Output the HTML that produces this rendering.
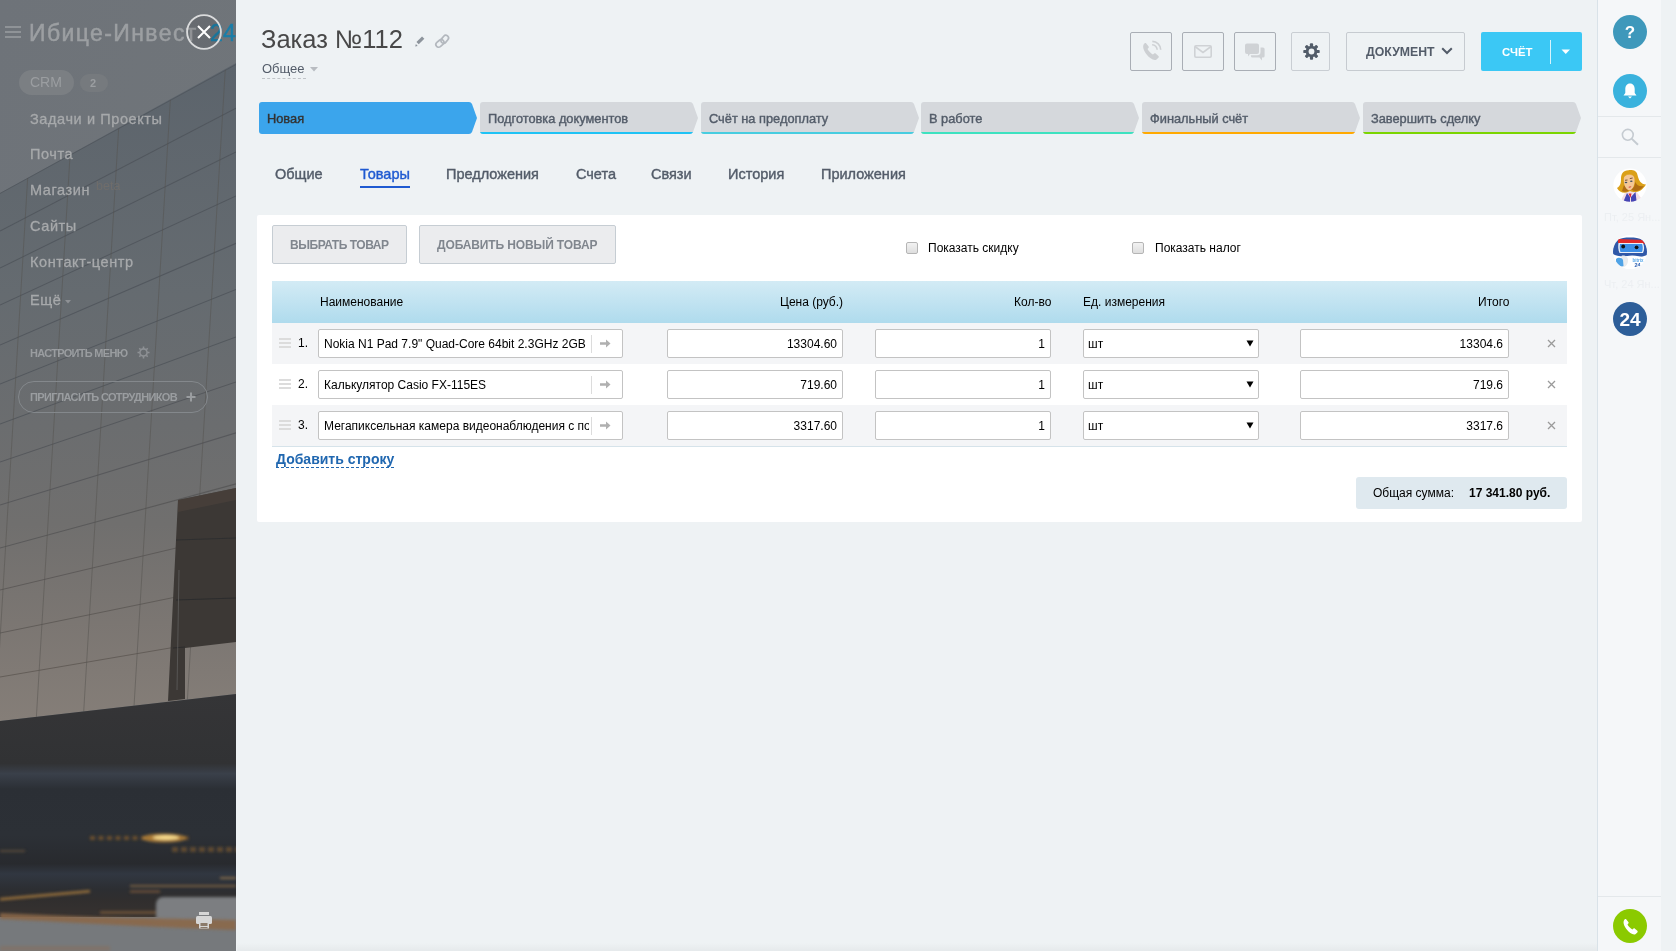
<!DOCTYPE html>
<html><head><meta charset="utf-8">
<style>
*{box-sizing:border-box;margin:0;padding:0}
html,body{width:1676px;height:951px;overflow:hidden;background:#eef2f4;font-family:"Liberation Sans",sans-serif;position:relative}
.a,.mi,.tab,.stage,.hd,.inp{will-change:transform}
.a{position:absolute}
#side{left:0;top:0;width:236px;height:951px;overflow:hidden;background:#6d7277}
#side .mi{position:absolute;left:30px;font-size:14.5px;letter-spacing:.6px;-webkit-text-stroke:.3px #a7a9ab;line-height:17px;color:#a7a9ab;white-space:nowrap}
#rp{left:1597px;top:0;width:64px;height:951px;background:#f5f7f9;border-left:1px solid #d9e2e8}
.tb{position:absolute;top:32px;height:39px;border:1px solid #a9aeb5;border-radius:2px}
.stage{position:absolute;top:103px;height:32px;font-size:12.8px;letter-spacing:0px;-webkit-text-stroke:.4px currentColor;color:#535c69;padding-left:8px;line-height:32px;white-space:nowrap}
.tab{position:absolute;top:166px;font-size:14.5px;-webkit-text-stroke:.4px currentColor;line-height:16px;color:#535c69;white-space:nowrap}
.inp{position:absolute;height:29px;background:#fff;border:1px solid #c3c3c3;border-radius:2px;font-size:12px;color:#000;line-height:28px;white-space:nowrap;overflow:hidden}
.num{text-align:right;padding-right:5px}
.hd{position:absolute;top:295px;font-size:12px;color:#000;white-space:nowrap}

.btn{background:#ebecee;border:1px solid #c6cdd3;border-radius:2px}
.btntx{font-size:12px;font-weight:bold;color:#80868e;white-space:nowrap;line-height:14px}
.cb{width:12px;height:12px;border:1px solid #b5b5b5;border-radius:2px;background:linear-gradient(#f2f2f2,#dedede)}
.botstrip{position:absolute;left:237px;top:943px;width:1360px;height:8px;background:linear-gradient(rgba(0,0,0,0),rgba(0,0,0,.035))}
</style></head><body>
<div id="side" class="a"><svg class="a" style="left:0;top:0" width="236" height="951" viewBox="0 0 236 951">
<defs>
<linearGradient id="sky" x1="0" y1="0" x2="1" y2="1"><stop offset="0" stop-color="#6e7379"/><stop offset="1" stop-color="#71767a"/></linearGradient>
<linearGradient id="fac" x1="0" y1="64" x2="0" y2="721" gradientUnits="userSpaceOnUse"><stop offset="0" stop-color="#5c646c"/><stop offset="0.35" stop-color="#656b70"/><stop offset="0.55" stop-color="#6b6d6f"/><stop offset="0.7" stop-color="#706f6e"/><stop offset="0.85" stop-color="#7b7672"/><stop offset="1" stop-color="#857e78"/></linearGradient>
<linearGradient id="road" x1="0" y1="694" x2="0" y2="951" gradientUnits="userSpaceOnUse"><stop offset="0" stop-color="#353537"/><stop offset="0.27" stop-color="#313234"/><stop offset="0.31" stop-color="#3a404a"/><stop offset="0.37" stop-color="#2b2f35"/><stop offset="0.55" stop-color="#2c3036"/><stop offset="0.66" stop-color="#282a2e"/><stop offset="0.7" stop-color="#313741"/><stop offset="0.76" stop-color="#2c2e32"/><stop offset="0.8" stop-color="#302e2e"/><stop offset="0.9" stop-color="#3a3431"/><stop offset="1" stop-color="#3d3833"/></linearGradient>
<filter id="bl" x="-20%" y="-50%" width="140%" height="200%"><feGaussianBlur stdDeviation="1.5"/></filter>
<filter id="bl2" x="-20%" y="-100%" width="140%" height="300%"><feGaussianBlur stdDeviation="3"/></filter>
<clipPath id="facclip"><path d="M0 193 L236 64 L236 694 L0 721Z"/></clipPath>
</defs>
<rect width="236" height="951" fill="url(#sky)"/>
<path d="M0 193.0 L236 63.1 L236 694 L0 721Z" fill="url(#fac)"/>
<line x1="0" y1="193.5" x2="236" y2="64.5" stroke="#4b5057" stroke-width="1" opacity="0.6"/>
<g clip-path="url(#facclip)">
<line x1="0" y1="231.0" x2="236" y2="108.2" stroke="#4b5057" stroke-width="1.1" opacity="0.7"/>
<line x1="0" y1="268.0" x2="236" y2="152.0" stroke="#4b5057" stroke-width="1.1" opacity="0.7"/>
<line x1="0" y1="305.0" x2="236" y2="195.9" stroke="#4b5057" stroke-width="1.1" opacity="0.7"/>
<line x1="0" y1="345.0" x2="236" y2="243.3" stroke="#4b5057" stroke-width="1.1" opacity="0.7"/>
<line x1="0" y1="384.0" x2="236" y2="289.5" stroke="#4b5057" stroke-width="1.1" opacity="0.7"/>
<line x1="0" y1="424.0" x2="236" y2="336.9" stroke="#4b5056" stroke-width="1.1" opacity="0.7"/>
<line x1="0" y1="462.0" x2="236" y2="382.0" stroke="#4d5055" stroke-width="1.1" opacity="0.7"/>
<line x1="0" y1="505.0" x2="236" y2="432.9" stroke="#4f5054" stroke-width="1.1" opacity="0.7"/>
<line x1="0" y1="548.0" x2="236" y2="483.9" stroke="#515152" stroke-width="1.1" opacity="0.7"/>
<line x1="0" y1="590.0" x2="236" y2="533.7" stroke="#545150" stroke-width="1.1" opacity="0.7"/>
<line x1="0" y1="633.0" x2="236" y2="584.7" stroke="#56524f" stroke-width="1.1" opacity="0.7"/>
<line x1="0" y1="677.0" x2="236" y2="636.8" stroke="#58524d" stroke-width="1.1" opacity="0.7"/>
<line x1="27.7" y1="177.7" x2="-4.8" y2="720" stroke="#55534f" stroke-width="1" opacity="0.5"/>
<line x1="70.1" y1="154.4" x2="36.2" y2="720" stroke="#55534f" stroke-width="1" opacity="0.5"/>
<line x1="118.7" y1="127.7" x2="83.2" y2="720" stroke="#55534f" stroke-width="1" opacity="0.5"/>
<line x1="170.4" y1="99.2" x2="133.2" y2="720" stroke="#55534f" stroke-width="1" opacity="0.5"/>
<line x1="225.3" y1="69.1" x2="186.2" y2="720" stroke="#55534f" stroke-width="1" opacity="0.5"/>
</g>
<path d="M178 500 L236 488 L236 642 L185 648 L185 699 L168 701Z" fill="#3c3835"/><path d="M178 500 L236 488 L236 500 L178 512Z" fill="#4a423c" opacity=".7"/>
<path d="M176 600 L236 598 M173 648 L185 647" stroke="#2c2c2d" stroke-width="1.2"/>
<path d="M176 540 L236 538" stroke="#2f2f30" stroke-width="1.2"/>
<line x1="179" y1="570" x2="177" y2="690" stroke="#6a6a6a" stroke-width="1" opacity=".6"/>
<path d="M0 721 L236 694 L236 951 L0 951Z" fill="url(#road)"/>
<g filter="url(#bl)">
<rect x="90.0" y="836" width="5" height="4" fill="#a06a28" opacity="0.55"/>
<rect x="98.5" y="836" width="5" height="4" fill="#a06a28" opacity="0.55"/>
<rect x="107.0" y="836" width="5" height="4" fill="#a06a28" opacity="0.55"/>
<rect x="115.5" y="836" width="5" height="4" fill="#a06a28" opacity="0.55"/>
<rect x="124.0" y="836" width="5" height="4" fill="#a06a28" opacity="0.55"/>
<rect x="132.5" y="836" width="5" height="4" fill="#a06a28" opacity="0.55"/>
<rect x="141.0" y="836" width="5" height="4" fill="#a06a28" opacity="0.55"/>
<rect x="149.5" y="836" width="5" height="4" fill="#a06a28" opacity="0.55"/>
<rect x="158.0" y="836" width="5" height="4" fill="#a06a28" opacity="0.55"/>
<rect x="166.5" y="836" width="5" height="4" fill="#a06a28" opacity="0.55"/>
<rect x="175.0" y="836" width="5" height="4" fill="#a06a28" opacity="0.55"/>
<rect x="183.5" y="836" width="5" height="4" fill="#a06a28" opacity="0.55"/>
<rect x="172.0" y="847" width="6" height="5" fill="#8a6030" opacity="0.55"/>
<rect x="181.0" y="847" width="6" height="5" fill="#8a6030" opacity="0.55"/>
<rect x="190.0" y="847" width="6" height="5" fill="#8a6030" opacity="0.55"/>
<rect x="199.0" y="847" width="6" height="5" fill="#8a6030" opacity="0.55"/>
<rect x="208.0" y="847" width="6" height="5" fill="#8a6030" opacity="0.55"/>
<rect x="217.0" y="847" width="6" height="5" fill="#8a6030" opacity="0.55"/>
<rect x="226.0" y="847" width="6" height="5" fill="#8a6030" opacity="0.55"/>
<rect x="235.0" y="847" width="6" height="5" fill="#8a6030" opacity="0.55"/>
<ellipse cx="164" cy="838" rx="22" ry="4.5" fill="#c08a38" opacity=".8"/><ellipse cx="166" cy="837.5" rx="13" ry="2.5" fill="#f5d88a"/>
<rect x="0" y="850" width="25" height="2" fill="#7a6040" opacity="0.6"/>
<path d="M0 898 L90 890 L90 892.5 L0 900.5Z" fill="#b08040" opacity="0.85"/>
<rect x="130" y="885" width="106" height="2" fill="#8a6a48" opacity="0.8"/>
<rect x="220" y="877" width="16" height="2" fill="#9a7a50" opacity="0.8"/>
<rect x="100" y="911.5" width="58" height="2" fill="#a07040" opacity="0.7"/><rect x="130" y="890.5" width="30" height="2" fill="#9a6a40" opacity="0.7"/>
</g>
<rect x="0" y="917" width="236" height="34" fill="#76797c"/>
<rect x="156" y="897" width="90" height="30" rx="7" fill="#7b7e81" filter="url(#bl)"/>
<path d="M0 913 C60 916 120 918 236 920 L236 930 C150 927 60 922 0 919Z" fill="#8a6848" opacity="0.9" filter="url(#bl)"/>
<rect x="0" y="946" width="110" height="5" fill="#86705e" opacity="0.6" filter="url(#bl)"/>
</svg><div class="a" style="left:5px;top:26px;width:16px;height:2px;background:#8f9397"></div>
<div class="a" style="left:5px;top:31px;width:16px;height:2px;background:#8f9397"></div>
<div class="a" style="left:5px;top:36px;width:16px;height:2px;background:#8f9397"></div>
<div class="a" style="left:29px;top:17px;font-size:23px;letter-spacing:1.4px;-webkit-text-stroke:0.5px #9c9fa2;color:#9c9fa2;white-space:nowrap;line-height:32px">Ибице-Инвест</div><div class="a" style="left:210px;top:17px;font-size:23px;letter-spacing:0.3px;-webkit-text-stroke:0.5px #1b7ea8;color:#1b7ea8;white-space:nowrap;line-height:32px">24</div>
<div class="a" style="left:19px;top:70px;width:55px;height:25px;border-radius:13px;background:#7b7f83"></div>
<div class="a" style="left:30px;top:74px;font-size:14px;color:#9b9ea1;line-height:17px">CRM</div>
<div class="a" style="left:80px;top:74px;width:28px;height:18px;border-radius:9px;background:#767a7e"></div>
<div class="a" style="left:90px;top:76px;font-size:11px;font-weight:bold;color:#9b9ea1;line-height:14px">2</div>
<div class="mi" style="top:111px">Задачи и Проекты</div>
<div class="mi" style="top:146px">Почта</div>
<div class="mi" style="top:182px">Магазин</div>
<div class="a" style="left:96px;top:179px;font-size:12.5px;color:#6f6d6b;line-height:15px">beta</div>
<div class="mi" style="top:218px">Сайты</div>
<div class="mi" style="top:254px">Контакт-центр</div>
<div class="mi" style="top:292px">Ещё</div>
<svg class="a" style="left:65px;top:300px" width="6" height="4"><path d="M0 0 H6 L3 3.5Z" fill="#8e9195"/></svg>
<div class="a" style="left:30px;top:347px;font-size:11px;letter-spacing:-0.7px;font-weight:bold;color:#9a9da0;white-space:nowrap;line-height:13px">НАСТРОИТЬ МЕНЮ</div>
<svg class="a" style="left:137px;top:346px" width="13" height="13" viewBox="0 0 13 13"><circle cx="6.5" cy="6.5" r="3.6" fill="none" stroke="#8e9195" stroke-width="1.6"/><g stroke="#8e9195" stroke-width="1.6"><path d="M6.5 0.5 V2.5 M6.5 10.5 V12.5 M0.5 6.5 H2.5 M10.5 6.5 H12.5 M2.3 2.3 L3.7 3.7 M9.3 9.3 L10.7 10.7 M2.3 10.7 L3.7 9.3 M9.3 3.7 L10.7 2.3"/></g></svg>
<div class="a" style="left:18px;top:381px;width:190px;height:32px;border-radius:16px;border:1px solid #84888c"></div>
<div class="a" style="left:30px;top:391px;font-size:11px;letter-spacing:-0.65px;font-weight:bold;color:#9a9da0;white-space:nowrap;line-height:13px">ПРИГЛАСИТЬ СОТРУДНИКОВ</div>
<svg class="a" style="left:186px;top:392px" width="10" height="10"><path d="M5 0.5 V9.5 M0.5 5 H9.5" stroke="#9a9da0" stroke-width="2"/></svg>
<svg class="a" style="left:196px;top:912px" width="16" height="17" viewBox="0 0 16 17"><rect x="3" y="0" width="10" height="3" fill="#d6d6d6"/><rect x="0" y="4" width="16" height="8" rx="1.5" fill="#d6d6d6"/><rect x="3" y="10" width="10" height="6.5" fill="#d6d6d6"/><rect x="4.5" y="11" width="7" height="3" fill="#8a7a6a"/><rect x="4.5" y="15" width="7" height="1" fill="#8a7a6a"/></svg>
<svg class="a" style="left:186px;top:14px" width="36" height="36" viewBox="0 0 36 36"><circle cx="18" cy="18" r="16.9" fill="#000" fill-opacity="0.07" stroke="#dadbdc" stroke-width="1.9"/><path d="M12 12 L24 24 M24 12 L12 24" stroke="#fff" stroke-width="2"/></svg>
<div class="a" style="left:236px;top:0;width:1px;height:951px;background:#f3f4f5"></div>
</div>
<div id="rp" class="a"></div>
<!-- header -->
<div class="a" style="left:261px;top:23px;font-size:25.5px;color:#484848;white-space:nowrap;line-height:32px">Заказ №112</div>
<svg class="a" style="left:414px;top:35px" width="13" height="13" viewBox="0 0 13 13"><path d="M3.6 8.2 L9.2 2.6" stroke="#8d949c" stroke-width="3.3"/><path d="M1.2 11.6 L1.9 9.1 L3.7 10.9Z" fill="#8d949c"/></svg><svg class="a" style="left:433px;top:32px" width="18" height="18" viewBox="0 0 18 18"><g fill="none" stroke="#b3b8be" stroke-width="1.7"><rect x="2.5" y="8.7" width="8.8" height="5.4" rx="2.7" transform="rotate(-40 6.9 11.4)"/><rect x="7.3" y="4.6" width="8.8" height="5.4" rx="2.7" transform="rotate(-50 11.7 7.3)"/></g></svg>
<div class="a" style="left:262px;top:61px;font-size:13px;color:#535c69;white-space:nowrap;line-height:16px">Общее</div>
<div class="a" style="left:262px;top:78px;width:44px;border-top:1px dashed #c0c4c8"></div>
<svg class="a" style="left:310px;top:67px" width="8" height="5"><path d="M0 0 L8 0 L4 4.5Z" fill="#b8bcc1"/></svg>

<!-- toolbar -->
<div class="tb" style="left:1130px;width:42px"></div>
<svg class="a" style="left:1141px;top:40px" width="21" height="21" viewBox="0 0 20 20"><path d="M3.5 3 C1.5 4.5 1.3 8 4.8 13 C8.3 17.5 12 19.8 14.5 18.7 L16.6 16.9 C17.1 16.4 17.1 15.7 16.6 15.2 L14 12.9 C13.5 12.4 12.8 12.5 12.3 13 L11.3 13.9 C9.5 12.9 7.1 10.4 6.2 8.6 L7.1 7.6 C7.6 7.1 7.6 6.4 7.1 5.9 L5 3.3 C4.6 2.8 4 2.7 3.5 3Z" fill="#cdd0d3"/><path d="M10.8 1.3 A8.2 8.2 0 0 1 18.8 9.3 M10.6 4.6 A4.8 4.8 0 0 1 15.4 9.4" fill="none" stroke="#cdd0d3" stroke-width="1.5"/></svg>
<div class="tb" style="left:1182px;width:42px"></div>
<svg class="a" style="left:1194px;top:45px" width="18" height="13" viewBox="0 0 18 13"><rect x="0.8" y="0.8" width="16.4" height="11.4" rx="1.2" fill="none" stroke="#cfd2d5" stroke-width="1.6"/><path d="M1 1.5 L9 7.5 L17 1.5" fill="none" stroke="#cfd2d5" stroke-width="1.6"/></svg>
<div class="tb" style="left:1234px;width:42px"></div>
<svg class="a" style="left:1244px;top:43px" width="22" height="20" viewBox="0 0 22 20"><path d="M3 0.5 H13 A2 2 0 0 1 15 2.5 V9 A2 2 0 0 1 13 11 H6 L4 13.5 V11 H3 A2 2 0 0 1 1 9 V2.5 A2 2 0 0 1 3 0.5Z" fill="#cfd2d5"/><path d="M16.5 4.5 H19 A1.6 1.6 0 0 1 20.6 6.1 V13 A1.6 1.6 0 0 1 19 14.6 H18 V17.5 L15.5 14.6 H8.5 A1.6 1.6 0 0 1 6.9 13 V12.3 H13.2 A3.3 3.3 0 0 0 16.5 9Z" fill="#cfd2d5"/></svg>
<div class="tb" style="left:1291px;width:39px;border-color:#c9ced3"></div>
<svg class="a" style="left:1303px;top:43px" width="17" height="17" viewBox="0 0 17 17"><g fill="#525c69"><circle cx="8.5" cy="8.5" r="5.8"/><rect x="6.9" y="0.3" width="3.2" height="16.4" rx="0.9"/><rect x="6.9" y="0.3" width="3.2" height="16.4" rx="0.9" transform="rotate(45 8.5 8.5)"/><rect x="6.9" y="0.3" width="3.2" height="16.4" rx="0.9" transform="rotate(90 8.5 8.5)"/><rect x="6.9" y="0.3" width="3.2" height="16.4" rx="0.9" transform="rotate(135 8.5 8.5)"/></g><circle cx="8.5" cy="8.5" r="2.9" fill="#eef2f4"/></svg>
<div class="tb" style="left:1346px;width:119px;border-color:#c6cbd0"></div>
<div class="a" style="left:1366px;top:44px;font-size:12.3px;font-weight:bold;color:#535c69;line-height:16px;white-space:nowrap">ДОКУМЕНТ</div>
<svg class="a" style="left:1441px;top:47px" width="12" height="8" viewBox="0 0 12 8"><path d="M1.2 1.2 L6 6 L10.8 1.2" fill="none" stroke="#535c69" stroke-width="2"/></svg>
<div class="a" style="left:1481px;top:32px;width:101px;height:39px;background:#3bc8f5;border-radius:2px"></div>
<div class="a" style="left:1502px;top:44px;font-size:11.4px;font-weight:bold;color:#fff;line-height:16px;white-space:nowrap">СЧЁТ</div>
<div class="a" style="left:1550px;top:40px;width:1px;height:24px;background:#fff;opacity:.8"></div>
<svg class="a" style="left:1561px;top:49px" width="10" height="6"><path d="M0.5 0.5 L9 0.5 L4.75 5Z" fill="#fff"/></svg>

<svg class="a" style="left:259px;top:102px" width="219" height="32" viewBox="0 0 219 32"><path d="M3 0 H210 Q212 0 213 2 L218 16 L213 30 Q212 32 210 32 H3 Q0 32 0 29 V3 Q0 0 3 0Z" fill="#3ba5ec"/></svg>
<div class="stage" style="left:259px;color:#333">Новая</div>
<svg class="a" style="left:480px;top:102px" width="219" height="32" viewBox="0 0 219 32"><defs><clipPath id="c480"><path d="M3 0 H210 Q212 0 213 2 L218 16 L213 30 Q212 32 210 32 H3 Q0 32 0 29 V3 Q0 0 3 0Z"/></clipPath></defs><path d="M3 0 H210 Q212 0 213 2 L218 16 L213 30 Q212 32 210 32 H3 Q0 32 0 29 V3 Q0 0 3 0Z" fill="#d5d8dc"/><rect x="0" y="30" width="219" height="2" fill="#1ec3f5" clip-path="url(#c480)"/></svg>
<div class="stage" style="left:480px;color:#535c69">Подготовка документов</div>
<svg class="a" style="left:701px;top:102px" width="219" height="32" viewBox="0 0 219 32"><defs><clipPath id="c701"><path d="M3 0 H210 Q212 0 213 2 L218 16 L213 30 Q212 32 210 32 H3 Q0 32 0 29 V3 Q0 0 3 0Z"/></clipPath></defs><path d="M3 0 H210 Q212 0 213 2 L218 16 L213 30 Q212 32 210 32 H3 Q0 32 0 29 V3 Q0 0 3 0Z" fill="#d5d8dc"/><rect x="0" y="30" width="219" height="2" fill="#47cde0" clip-path="url(#c701)"/></svg>
<div class="stage" style="left:701px;color:#535c69">Счёт на предоплату</div>
<svg class="a" style="left:921px;top:102px" width="219" height="32" viewBox="0 0 219 32"><defs><clipPath id="c921"><path d="M3 0 H210 Q212 0 213 2 L218 16 L213 30 Q212 32 210 32 H3 Q0 32 0 29 V3 Q0 0 3 0Z"/></clipPath></defs><path d="M3 0 H210 Q212 0 213 2 L218 16 L213 30 Q212 32 210 32 H3 Q0 32 0 29 V3 Q0 0 3 0Z" fill="#d5d8dc"/><rect x="0" y="30" width="219" height="2" fill="#3de2c0" clip-path="url(#c921)"/></svg>
<div class="stage" style="left:921px;color:#535c69">В работе</div>
<svg class="a" style="left:1142px;top:102px" width="219" height="32" viewBox="0 0 219 32"><defs><clipPath id="c1142"><path d="M3 0 H210 Q212 0 213 2 L218 16 L213 30 Q212 32 210 32 H3 Q0 32 0 29 V3 Q0 0 3 0Z"/></clipPath></defs><path d="M3 0 H210 Q212 0 213 2 L218 16 L213 30 Q212 32 210 32 H3 Q0 32 0 29 V3 Q0 0 3 0Z" fill="#d5d8dc"/><rect x="0" y="30" width="219" height="2" fill="#ffa900" clip-path="url(#c1142)"/></svg>
<div class="stage" style="left:1142px;color:#535c69">Финальный счёт</div>
<svg class="a" style="left:1363px;top:102px" width="219" height="32" viewBox="0 0 219 32"><defs><clipPath id="c1363"><path d="M3 0 H210 Q212 0 213 2 L218 16 L213 30 Q212 32 210 32 H3 Q0 32 0 29 V3 Q0 0 3 0Z"/></clipPath></defs><path d="M3 0 H210 Q212 0 213 2 L218 16 L213 30 Q212 32 210 32 H3 Q0 32 0 29 V3 Q0 0 3 0Z" fill="#d5d8dc"/><rect x="0" y="30" width="219" height="2" fill="#7bd500" clip-path="url(#c1363)"/></svg>
<div class="stage" style="left:1363px;color:#535c69">Завершить сделку</div>
<div class="tab" style="left:275px">Общие</div>
<div class="tab" style="left:360px;color:#1f5ad1">Товары</div>
<div class="a" style="left:360px;top:186px;width:50px;height:2px;background:#1f5ad1"></div>
<div class="tab" style="left:446px">Предложения</div>
<div class="tab" style="left:576px">Счета</div>
<div class="tab" style="left:651px">Связи</div>
<div class="tab" style="left:728px">История</div>
<div class="tab" style="left:821px">Приложения</div>

<div class="a" style="left:257px;top:215px;width:1325px;height:307px;background:#fff;border-radius:2px"></div>
<div class="a btn" style="left:272px;top:225px;width:135px;height:39px"></div>
<div class="a btntx" style="left:290px;top:238px;letter-spacing:-.45px">ВЫБРАТЬ ТОВАР</div>
<div class="a btn" style="left:419px;top:225px;width:197px;height:39px"></div>
<div class="a btntx" style="left:437px;top:238px;letter-spacing:-.12px">ДОБАВИТЬ НОВЫЙ ТОВАР</div>
<div class="a cb" style="left:906px;top:242px"></div>
<div class="a" style="left:928px;top:241px;font-size:12px;line-height:15px;color:#000;white-space:nowrap">Показать скидку</div>
<div class="a cb" style="left:1132px;top:242px"></div>
<div class="a" style="left:1155px;top:241px;font-size:12px;line-height:15px;color:#000;white-space:nowrap">Показать налог</div>
<div class="a" style="left:272px;top:281px;width:1295px;height:42px;background:linear-gradient(#d3ebf5,#afdbed)"></div>
<div class="hd" style="left:320px">Наименование</div>
<div class="hd" style="right:833px">Цена (руб.)</div>
<div class="hd" style="right:625px">Кол-во</div>
<div class="hd" style="left:1083px">Ед. измерения</div>
<div class="hd" style="right:167px">Итого</div>
<div class="a" style="left:272px;top:323px;width:1295px;height:41px;background:#f4f5f7"></div>
<div class="a" style="left:279px;top:338px;width:12px;height:2px;background:#dcdcdc"></div>
<div class="a" style="left:279px;top:342px;width:12px;height:2px;background:#dcdcdc"></div>
<div class="a" style="left:279px;top:346px;width:12px;height:2px;background:#dcdcdc"></div>
<div class="a" style="left:298px;top:336px;font-size:12px;line-height:15px;color:#000">1.</div>
<div class="inp" style="left:318px;top:329px;width:305px;padding-left:5px"><span style="display:inline-block;width:265px;overflow:hidden">Nokia N1 Pad 7.9" Quad-Core 64bit 2.3GHz 2GB</span></div>
<div class="a" style="left:591px;top:335px;width:1px;height:18px;background:#dcdcdc"></div>
<svg class="a" style="left:600px;top:339px" width="11" height="9" viewBox="0 0 11 9"><path d="M0 3.3 H6 V0.5 L10.5 4.5 L6 8.5 V5.7 H0Z" fill="#b0b0b0"/></svg>
<div class="inp num" style="left:667px;top:329px;width:176px">13304.60</div>
<div class="inp num" style="left:875px;top:329px;width:176px">1</div>
<div class="inp" style="left:1083px;top:329px;width:176px;padding-left:4px">шт</div>
<svg class="a" style="left:1246px;top:340px" width="8" height="7"><path d="M0.5 0.5 H7.5 L4 6.5Z" fill="#000"/></svg>
<div class="inp num" style="left:1300px;top:329px;width:209px">13304.6</div>
<svg class="a" style="left:1547px;top:339px" width="9" height="9" viewBox="0 0 9 9"><path d="M1 1 L8 8 M8 1 L1 8" stroke="#9a9a9a" stroke-width="1.3"/></svg>
<div class="a" style="left:272px;top:364px;width:1295px;height:41px;background:#fff"></div>
<div class="a" style="left:279px;top:379px;width:12px;height:2px;background:#dcdcdc"></div>
<div class="a" style="left:279px;top:383px;width:12px;height:2px;background:#dcdcdc"></div>
<div class="a" style="left:279px;top:387px;width:12px;height:2px;background:#dcdcdc"></div>
<div class="a" style="left:298px;top:377px;font-size:12px;line-height:15px;color:#000">2.</div>
<div class="inp" style="left:318px;top:370px;width:305px;padding-left:5px"><span style="display:inline-block;width:265px;overflow:hidden">Калькулятор Casio FX-115ES</span></div>
<div class="a" style="left:591px;top:376px;width:1px;height:18px;background:#dcdcdc"></div>
<svg class="a" style="left:600px;top:380px" width="11" height="9" viewBox="0 0 11 9"><path d="M0 3.3 H6 V0.5 L10.5 4.5 L6 8.5 V5.7 H0Z" fill="#b0b0b0"/></svg>
<div class="inp num" style="left:667px;top:370px;width:176px">719.60</div>
<div class="inp num" style="left:875px;top:370px;width:176px">1</div>
<div class="inp" style="left:1083px;top:370px;width:176px;padding-left:4px">шт</div>
<svg class="a" style="left:1246px;top:381px" width="8" height="7"><path d="M0.5 0.5 H7.5 L4 6.5Z" fill="#000"/></svg>
<div class="inp num" style="left:1300px;top:370px;width:209px">719.6</div>
<svg class="a" style="left:1547px;top:380px" width="9" height="9" viewBox="0 0 9 9"><path d="M1 1 L8 8 M8 1 L1 8" stroke="#9a9a9a" stroke-width="1.3"/></svg>
<div class="a" style="left:272px;top:405px;width:1295px;height:41px;background:#f4f5f7"></div>
<div class="a" style="left:279px;top:420px;width:12px;height:2px;background:#dcdcdc"></div>
<div class="a" style="left:279px;top:424px;width:12px;height:2px;background:#dcdcdc"></div>
<div class="a" style="left:279px;top:428px;width:12px;height:2px;background:#dcdcdc"></div>
<div class="a" style="left:298px;top:418px;font-size:12px;line-height:15px;color:#000">3.</div>
<div class="inp" style="left:318px;top:411px;width:305px;padding-left:5px"><span style="display:inline-block;width:265px;overflow:hidden">Мегапиксельная камера видеонаблюдения с поддержкой</span></div>
<div class="a" style="left:591px;top:417px;width:1px;height:18px;background:#dcdcdc"></div>
<svg class="a" style="left:600px;top:421px" width="11" height="9" viewBox="0 0 11 9"><path d="M0 3.3 H6 V0.5 L10.5 4.5 L6 8.5 V5.7 H0Z" fill="#b0b0b0"/></svg>
<div class="inp num" style="left:667px;top:411px;width:176px">3317.60</div>
<div class="inp num" style="left:875px;top:411px;width:176px">1</div>
<div class="inp" style="left:1083px;top:411px;width:176px;padding-left:4px">шт</div>
<svg class="a" style="left:1246px;top:422px" width="8" height="7"><path d="M0.5 0.5 H7.5 L4 6.5Z" fill="#000"/></svg>
<div class="inp num" style="left:1300px;top:411px;width:209px">3317.6</div>
<svg class="a" style="left:1547px;top:421px" width="9" height="9" viewBox="0 0 9 9"><path d="M1 1 L8 8 M8 1 L1 8" stroke="#9a9a9a" stroke-width="1.3"/></svg>
<div class="a" style="left:272px;top:446px;width:1295px;height:1px;background:#d6e3ea"></div>
<div class="a" style="left:276px;top:451px;font-size:14px;font-weight:bold;color:#2067b0;line-height:17px;white-space:nowrap">Добавить строку</div>
<div class="a" style="left:276px;top:467px;width:118px;border-top:1px dashed #2067b0"></div>
<div class="a" style="left:1356px;top:477px;width:211px;height:32px;background:#dfe9ef;border-radius:3px"></div>
<div class="a" style="left:1373px;top:486px;font-size:12px;line-height:15px;color:#000;white-space:nowrap">Общая сумма:</div>
<div class="a" style="left:1469px;top:486px;font-size:12px;font-weight:bold;line-height:15px;color:#000;white-space:nowrap">17 341.80 руб.</div>
<div class="a" style="left:1598px;top:116px;width:63px;height:1px;background:#e4e8eb"></div>
<div class="a" style="left:1598px;top:157px;width:63px;height:1px;background:#e4e8eb"></div>
<div class="a" style="left:1598px;top:896px;width:63px;height:1px;background:#e4e8eb"></div>
<svg class="a" style="left:1613px;top:15px" width="34" height="34" viewBox="0 0 34 34"><circle cx="17" cy="17" r="17" fill="#3e98bb"/><text x="17" y="23" text-anchor="middle" font-family="Liberation Sans" font-weight="bold" font-size="17" fill="#fff">?</text></svg>
<svg class="a" style="left:1613px;top:74px" width="34" height="34" viewBox="0 0 34 34"><circle cx="17" cy="17" r="17" fill="#3ab2dd"/><path d="M17 9.5 C13.8 9.5 12.3 12 12.3 15 V19 L10.5 21.5 H23.5 L21.7 19 V15 C21.7 12 20.2 9.5 17 9.5Z" fill="#fff"/><path d="M15 22.5 H19 L17 24.5Z" fill="#fff"/></svg>
<svg class="a" style="left:1620px;top:127px" width="20" height="20" viewBox="0 0 20 20"><circle cx="7.8" cy="7.8" r="5.4" fill="none" stroke="#c5cbd1" stroke-width="1.6"/><path d="M11.6 11.6 L18 17.8" stroke="#c5cbd1" stroke-width="2"/></svg>
<svg class="a" style="left:1610px;top:165px" width="40" height="40" viewBox="0 0 40 40"><defs><clipPath id="wc"><circle cx="20" cy="20.2" r="16.6"/></clipPath></defs><circle cx="20" cy="20.2" r="16.6" fill="#fff"/><g clip-path="url(#wc)">
<path d="M16 26 L26 26 L31 33 L29 40 H10 L12 33Z" fill="#f3dde6"/>
<path d="M12 40 L17 28 L20 32 L20 40Z M21 40 L21 32 L25.5 27 L27 40Z" fill="#4545b5"/>
<path d="M18.5 28.5 L21.5 28.5 L20.5 33 Z" fill="#d8283a"/>
<path d="M7 23 C9 27 14 29 18 27 L20 26 C24 28 31 28 36 19.5 C31 19.5 28.5 15 27.5 10 C26.5 5.5 23 4.8 18.5 5.2 C13 5.6 11 9 11 13.5 C11 18 10.5 21 7 23Z" fill="#dba018"/>
<path d="M12 26 C15 27.5 17 27 19 25 L22 25 C26 27 30 26 34 21 C30 22 27 21 25.5 17 L24 22 C21 24 16 24 14 20Z" fill="#a86414" opacity=".85"/>
<path d="M13.8 14 C14 10 17 9.2 20.5 9.4 C23.5 9.6 24.8 12 24.6 16 C24.4 21 22.5 25 19.5 25.2 C16 25.2 13.6 20 13.8 14Z" fill="#f4c796"/>
<path d="M13.5 13 C15 9.5 21 8.5 25 12 C23 9 15.5 8 13 12Z" fill="#dba018"/>
<ellipse cx="16" cy="17.5" rx="1.3" ry=".8" fill="#405060"/><ellipse cx="21.3" cy="16.2" rx="1.3" ry=".8" fill="#405060"/>
<path d="M15 15.3 L17.5 15 M19.8 13.6 L22.6 13" stroke="#553322" stroke-width=".8"/>
<path d="M18.3 22 Q19.8 21 21.5 21.7 Q20 23.2 18.3 22Z" fill="#c81e2a"/>
</g></svg>
<svg class="a" style="left:1610px;top:232px" width="40" height="40" viewBox="0 0 40 40"><defs><clipPath id="rbc"><circle cx="20" cy="20" r="17"/></clipPath></defs><circle cx="20" cy="20" r="17" fill="#fff"/><g clip-path="url(#rbc)">
<path d="M3 16 C3 8 10 5.5 20 5.5 C30 5.5 37 8 37 16 L37 23 C33 25 25 25.5 20 24 C12 25 6 24 3 22Z" fill="#2f58a8"/>
<path d="M8 7 L34 8 L35 12 L8 11Z" fill="#e02a2a"/>
<path d="M8.5 11 H33 C34.5 14 34.5 18 33 21 H9.5 C8 18 8 14 8.5 11Z" fill="#e8eef6"/>
<path d="M10 12 H32 C33 14.5 33 17.5 32 20 H10.5 C9.5 17.5 9.5 14.5 10 12Z" fill="#3d8ee6"/>
<circle cx="13.2" cy="14.5" r="1.9" fill="#111"/><circle cx="26.6" cy="15.3" r="1.9" fill="#111"/>
<path d="M11 40 L12 26 C16 22.5 28 22.5 34 26 L36 40Z" fill="#fff"/>
<path d="M11.5 24 C13 23 18.5 23.5 18 29 C17.5 34 14 36 11 35Z" fill="#e9ecef"/>
<path d="M6 27 C8 25 12 25.5 13 28 L13.5 34 C11 35 7 34 6 31Z" fill="#4fa3e6"/>
<text x="22.5" y="29.5" font-family="Liberation Sans" font-weight="bold" font-size="4.5" fill="#5aa8e8">bitrix</text>
<text x="24.5" y="35" font-family="Liberation Sans" font-weight="bold" font-size="5.5" fill="#2d5fb0">24</text>
</g></svg>
<svg class="a" style="left:1613px;top:302px" width="34" height="34" viewBox="0 0 34 34"><circle cx="17" cy="17" r="17" fill="#2d5e99"/><text x="17" y="24" text-anchor="middle" font-family="Liberation Sans" font-weight="bold" font-size="19" fill="#fff">24</text></svg>
<div class="a" style="left:1604px;top:211px;font-size:11px;color:#eceff2;white-space:nowrap">Пт, 25 Ян...</div>
<div class="a" style="left:1604px;top:278px;font-size:11px;color:#eceff2;white-space:nowrap">Чт, 24 Ян...</div>
<svg class="a" style="left:1613px;top:909px" width="34" height="34" viewBox="0 0 34 34"><circle cx="17" cy="17" r="17" fill="#8bca00"/><g transform="translate(8.6 7.4) scale(0.95)"><path d="M3.5 3 C1.5 4.5 1.3 8 4.8 13 C8.3 17.5 12 19.8 14.5 18.7 L16.6 16.9 C17.1 16.4 17.1 15.7 16.6 15.2 L14 12.9 C13.5 12.4 12.8 12.5 12.3 13 L11.3 13.9 C9.5 12.9 7.1 10.4 6.2 8.6 L7.1 7.6 C7.6 7.1 7.6 6.4 7.1 5.9 L5 3.3 C4.6 2.8 4 2.7 3.5 3Z" fill="#fff"/></g></svg>

<div class="botstrip"></div>
</body></html>
